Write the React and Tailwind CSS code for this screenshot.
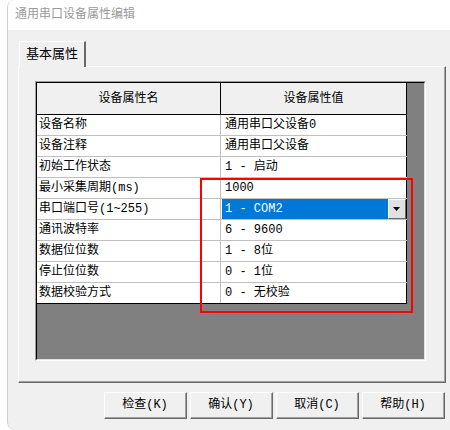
import React from "react";

const rows = [
  ["设备名称", "通用串口父设备0"],
  ["设备注释", "通用串口父设备"],
  ["初始工作状态", "1 - 启动"],
  ["最小采集周期(ms)", "1000"],
  ["串口端口号(1~255)", "1 - COM2", true],
  ["通讯波特率", "6 - 9600"],
  ["数据位位数", "1 - 8位"],
  ["停止位位数", "0 - 1位"],
  ["数据校验方式", "0 - 无校验"],
];

function Btn({ children }) {
  return (
    <div className="w-[83px] h-[27px] border-t border-l border-white border-r border-b border-r-[#696969] border-b-[#696969]">
      <div className="w-full h-full border-r border-b border-[#a0a0a0] bg-[#f0f0f0] flex items-center justify-center text-[12px] text-black whitespace-pre">
        {children}
      </div>
    </div>
  );
}

export default function App() {
  return (
    <div
      className="w-[450px] h-[430px] bg-white overflow-hidden relative"
      style={{ fontFamily: '"Liberation Mono", "Noto Sans CJK SC", monospace' }}
    >
      <div className="ml-[7px] w-[443px] h-[430px] border-l border-[#cfcfcf] rounded-l-[8px] bg-[#f0f0f0] overflow-hidden flex flex-col">
        <div className="h-[30px] bg-white flex items-center pl-[7px] text-[12px] text-[#9a9a9a]">
          通用串口设备属性编辑
        </div>
        <div className="flex-1 pl-[10px] pt-[11px] flex flex-col">
          {/* tab */}
          <div className="ml-[1px] w-[67px] h-[26px] -mb-[1px] relative z-10 bg-[#f0f0f0] border-t border-l border-white border-r-2 border-r-[#696969] flex items-center pl-[6px] text-[13px] text-black">
            基本属性
          </div>
          {/* panel */}
          <div className="w-[428px] h-[317px] border-t border-l border-white border-r border-b border-r-[#696969] border-b-[#696969]">
            <div className="w-full h-full border-r border-b border-[#a0a0a0] pl-[16px] pt-[14px]">
              {/* grid sunken box */}
              <div className="w-[391px] h-[280px] border-t border-l border-[#a0a0a0] border-r border-b border-r-white border-b-white">
                <div className="w-full h-full border-t border-l border-black border-r border-b border-r-[#e3e3e3] border-b-[#e3e3e3] bg-[#808080]">
                  <div className="w-[370px] flex flex-col">
                    {/* header */}
                    <div className="flex h-[32px] border-b border-black bg-[#f0f0f0] text-[12px] text-black">
                      <div className="w-[184px] border-r border-black flex items-center justify-center">
                        设备属性名
                      </div>
                      <div className="w-[186px] border-r border-black flex items-center justify-center">
                        设备属性值
                      </div>
                    </div>
                    {rows.map(([k, v, sel], i) => (
                      <div
                        key={i}
                        className={
                          "flex h-[21px] bg-white text-[12px] text-black border-b " +
                          (i === rows.length - 1 ? "border-black" : "border-[#c0c0c0]")
                        }
                      >
                        <div className="w-[184px] border-r border-[#c0c0c0] flex items-center pl-[2px] whitespace-pre">
                          {k}
                        </div>
                        <div className="w-[186px] border-r border-black flex">
                          {sel ? (
                            <div className="flex-1 flex pl-[1px]">
                              <div className="flex-1 bg-[#0078d7] text-white flex items-center pl-[3px] whitespace-pre">
                                {v}
                              </div>
                              <div className="w-[18px] h-[20px] bg-[#e1e1e1] border border-t-white border-l-white border-r-[#696969] border-b-[#696969] flex items-center justify-center">
                                <svg width="8" height="5" viewBox="0 0 8 5">
                                  <path d="M0 0 H7 L3.5 4 Z" fill="#000" />
                                </svg>
                              </div>
                            </div>
                          ) : (
                            <div className="flex-1 flex items-center pl-[4px] whitespace-pre">{v}</div>
                          )}
                        </div>
                      </div>
                    ))}
                  </div>
                </div>
              </div>
            </div>
          </div>
          {/* buttons */}
          <div className="mt-[9px] ml-[86px] flex gap-[3px]">
            <Btn>检查(K)</Btn>
            <Btn>确认(Y)</Btn>
            <Btn>取消(C)</Btn>
            <Btn>帮助(H)</Btn>
          </div>
        </div>
      </div>
      {/* red annotation box */}
      <div className="absolute left-[200px] top-[178px] w-[213px] h-[135px] border-2 border-[#ff0000]" />
    </div>
  );
}
